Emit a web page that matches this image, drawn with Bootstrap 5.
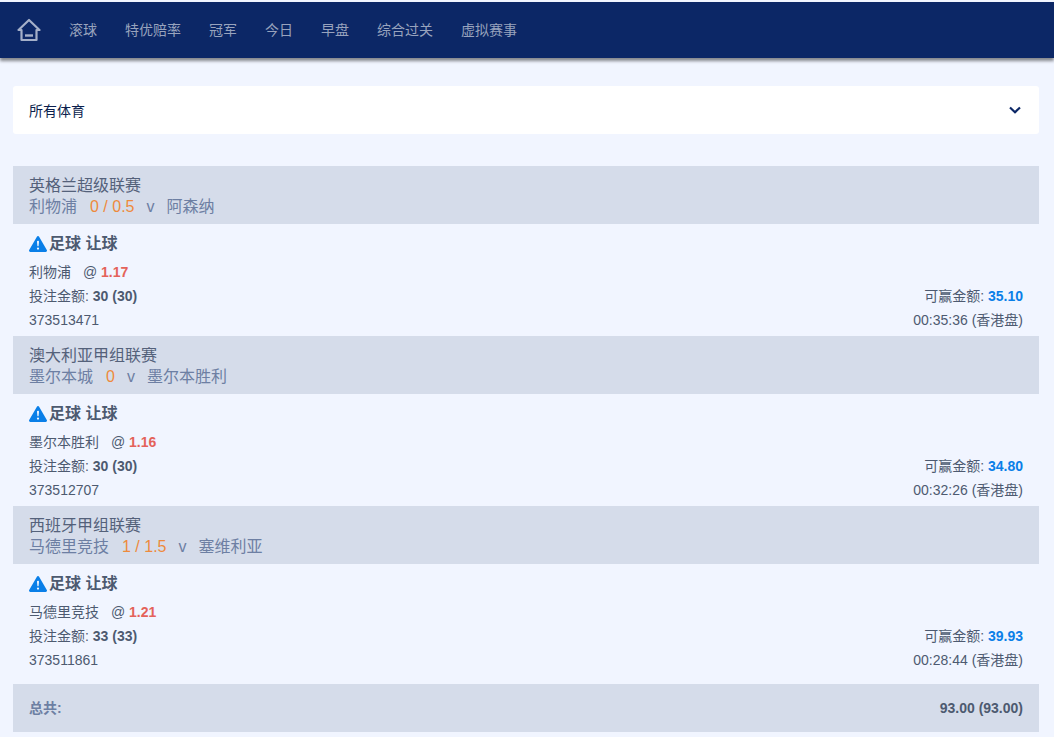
<!DOCTYPE html>
<html lang="zh">
<head>
<meta charset="utf-8">
<title>投注</title>
<link href="https://cdn.jsdelivr.net/npm/bootstrap@5.3.0/dist/css/bootstrap.min.css" rel="stylesheet">
<style>
html,body{height:737px;overflow:hidden}
body{background:#f1f5ff;font-family:"Liberation Sans","Noto Sans CJK SC",sans-serif;font-size:14px;color:#4d5a70;padding-top:2px}
.topbar{height:56px;background:#0c2766;box-shadow:0 3px 3px rgba(0,0,0,.45);padding-left:17px;gap:28px}
.topbar a{color:#98a3bd;font-size:14px;text-decoration:none;line-height:20px}
.topbar svg{display:block}
.page-wrap{padding:28px 15px 0 13px}
.sport-select{height:48px;background:#fff;border-radius:3px;padding:2px 18px 0 16px;color:#0c1f4d;font-size:14px;margin-bottom:32px}
.sport-select svg{margin-top:-2px}
.league-head{height:58px;background:#d5dcea;padding:9px 16px 0;line-height:21px}
.league-name{font-size:16px;color:#54617a}
.match-line{font-size:16px;color:#6d7fa3}
.hcp{color:#ee8a3c;margin:0 12px 0 13px}
.vs{margin-right:12px;color:#6d7fa3}
.bet-body{height:112px;padding:8px 16px 0;line-height:24px}
.bet-title{font-size:16px;font-weight:700;color:#4d5a70;height:24px;margin-bottom:4px;gap:2px}
.odds{color:#e4625a;font-weight:700}
.at{margin-left:8px}
.win{color:#0a7fe8;font-weight:700}
.strong-dark{font-weight:700;color:#4d5a70}
.sum-bar{height:48px;background:#d5dcea;margin-top:8px;padding:0 16px;font-weight:700}
.sum-label{color:#6d7fa3}
</style>
</head>
<body>
<nav class="topbar d-flex align-items-center">
  <a href="#" aria-label="home"><svg width="24" height="24" viewBox="0 0 24 24" fill="none" stroke="#a5b0c9" stroke-width="2.200"><path d="M1.5 12 12 2 22.500 12H19.500V22H4.500V12Z" stroke-linejoin="round"/><path d="M8 17.500H16" stroke-width="2.400"/></svg></a>
  <a href="#">滚球</a><a href="#">特优赔率</a><a href="#">冠军</a><a href="#">今日</a><a href="#">早盘</a><a href="#">综合过关</a><a href="#">虚拟赛事</a>
</nav>
<main class="page-wrap">
  <div class="sport-select d-flex align-items-center justify-content-between">
    <span>所有体育</span>
    <svg width="12" height="8" viewBox="0 0 12 8" fill="none" stroke="#0c2766" stroke-width="2.200"><path d="M1 1.500 6 6.200 11 1.500"/></svg>
  </div>

  <section>
    <div class="league-head">
      <div class="league-name">英格兰超级联赛</div>
      <div class="match-line">利物浦<span class="hcp">0 / 0.5</span><span class="vs">v</span>阿森纳</div>
    </div>
    <div class="bet-body">
      <div class="bet-title d-flex align-items-center"><svg width="18" height="18" viewBox="0 0 16 16" fill="#0a7fe8"><path d="M8.982 1.566a1.13 1.13 0 0 0-1.96 0L.165 13.233c-.457.778.091 1.767.98 1.767h13.713c.889 0 1.438-.99.98-1.767L8.982 1.566zM8 5c.535 0 .954.462.9.995l-.35 3.507a.552.552 0 0 1-1.100 0L7.100 5.995A.905.905 0 0 1 8 5zm.002 6a1 1 0 1 1 0 2 1 1 0 0 1 0-2z"/></svg>足球 让球</div>
      <div>利物浦 <span class="at">@</span> <span class="odds">1.17</span></div>
      <div class="d-flex justify-content-between"><span>投注金额: <span class="strong-dark">30 (30)</span></span><span>可赢金额: <span class="win">35.10</span></span></div>
      <div class="d-flex justify-content-between"><span>373513471</span><span>00:35:36 (香港盘)</span></div>
    </div>
  </section>

  <section>
    <div class="league-head">
      <div class="league-name">澳大利亚甲组联赛</div>
      <div class="match-line">墨尔本城<span class="hcp">0</span><span class="vs">v</span>墨尔本胜利</div>
    </div>
    <div class="bet-body">
      <div class="bet-title d-flex align-items-center"><svg width="18" height="18" viewBox="0 0 16 16" fill="#0a7fe8"><path d="M8.982 1.566a1.13 1.13 0 0 0-1.96 0L.165 13.233c-.457.778.091 1.767.98 1.767h13.713c.889 0 1.438-.99.98-1.767L8.982 1.566zM8 5c.535 0 .954.462.9.995l-.35 3.507a.552.552 0 0 1-1.100 0L7.100 5.995A.905.905 0 0 1 8 5zm.002 6a1 1 0 1 1 0 2 1 1 0 0 1 0-2z"/></svg>足球 让球</div>
      <div>墨尔本胜利 <span class="at">@</span> <span class="odds">1.16</span></div>
      <div class="d-flex justify-content-between"><span>投注金额: <span class="strong-dark">30 (30)</span></span><span>可赢金额: <span class="win">34.80</span></span></div>
      <div class="d-flex justify-content-between"><span>373512707</span><span>00:32:26 (香港盘)</span></div>
    </div>
  </section>

  <section>
    <div class="league-head">
      <div class="league-name">西班牙甲组联赛</div>
      <div class="match-line">马德里竞技<span class="hcp">1 / 1.5</span><span class="vs">v</span>塞维利亚</div>
    </div>
    <div class="bet-body">
      <div class="bet-title d-flex align-items-center"><svg width="18" height="18" viewBox="0 0 16 16" fill="#0a7fe8"><path d="M8.982 1.566a1.13 1.13 0 0 0-1.96 0L.165 13.233c-.457.778.091 1.767.98 1.767h13.713c.889 0 1.438-.99.98-1.767L8.982 1.566zM8 5c.535 0 .954.462.9.995l-.35 3.507a.552.552 0 0 1-1.100 0L7.100 5.995A.905.905 0 0 1 8 5zm.002 6a1 1 0 1 1 0 2 1 1 0 0 1 0-2z"/></svg>足球 让球</div>
      <div>马德里竞技 <span class="at">@</span> <span class="odds">1.21</span></div>
      <div class="d-flex justify-content-between"><span>投注金额: <span class="strong-dark">33 (33)</span></span><span>可赢金额: <span class="win">39.93</span></span></div>
      <div class="d-flex justify-content-between"><span>373511861</span><span>00:28:44 (香港盘)</span></div>
    </div>
  </section>

  <div class="sum-bar d-flex align-items-center justify-content-between"><span class="sum-label">总共:</span><span>93.00 (93.00)</span></div>
</main>
</body>
</html>
